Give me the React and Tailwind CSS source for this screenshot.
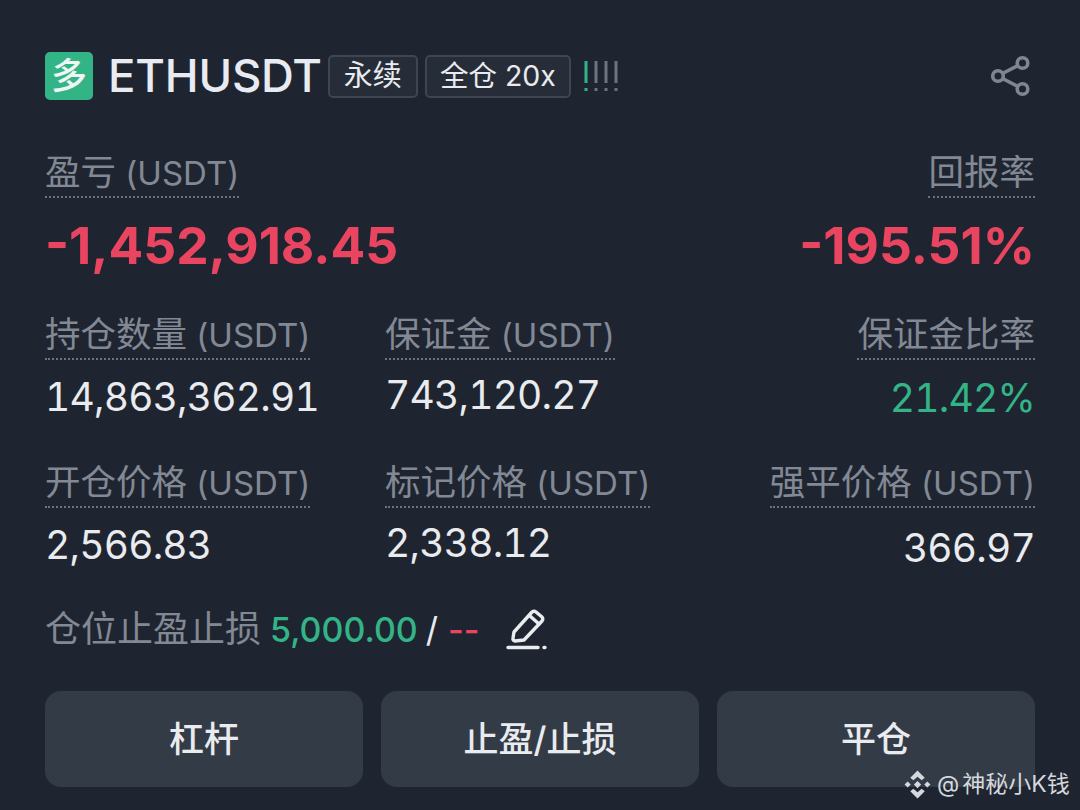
const F = { fontFamily: '"Inter","Noto Sans CJK SC",sans-serif' };

function Label({ cjk, unit }) {
  return (
    <div className="inline-block h-[46px] border-b-2 border-dotted border-[#6d7480] text-[#828995] leading-[42px] whitespace-nowrap">
      <span className="text-[35.500px]">{cjk}</span>
      {unit && <span className="text-[33px]"> {unit}</span>}
    </div>
  );
}

function Cell({ cjk, unit, value, right, valueClass = "text-[#e9ebef]", mt = "mt-[11px]" }) {
  return (
    <div className={"flex flex-col h-[109px] " + (right ? "items-end" : "items-start")}>
      <Label cjk={cjk} unit={unit} />
      <div className={"text-[39px] tracking-[-0.8px] leading-[52px] tabular-nums whitespace-nowrap " + mt + " " + valueClass}>{value}</div>
    </div>
  );
}

function Share() {
  return (
    <svg width="42" height="42" viewBox="0 0 42 42" fill="none" stroke="#7f8692" strokeWidth="3.600">
      <circle cx="32.500" cy="8" r="5.300" />
      <circle cx="8" cy="21" r="5.300" />
      <circle cx="32.500" cy="34" r="5.300" />
      <path d="M12.500 18.500 L27.800 10.500 M12.500 23.500 L27.800 31.500" />
    </svg>
  );
}

function Pencil() {
  return (
    <svg width="42" height="42" viewBox="0 0 42 42" fill="none" stroke="#eaecef" strokeWidth="3.400" strokeLinecap="round" strokeLinejoin="round">
      <path d="M8 24 L26 4 Q28 2.500 30 4 L36 9 Q37.500 11 36 13 L18 32 L9 33 Q6.500 32.500 7 30 Z" />
      <path d="M24 8 L33 16" />
      <path d="M2 39.500 H32 M38 39.500 H39" />
    </svg>
  );
}

function Risk() {
  const bars = [
    [2, "#33b487"],
    [12, "#6d7480"],
    [22, "#6d7480"],
    [32, "#6d7480"],
  ];
  return (
    <svg width="34" height="34" viewBox="0 0 34 34" fill="none" strokeWidth="3">
      {bars.map(([x, c]) => (
        <g key={x} stroke={c}>
          <path d="M0 2 V24" transform={`translate(${x} 0)`} />
          <path d="M0 29 V32" transform={`translate(${x} 0)`} />
        </g>
      ))}
    </svg>
  );
}

function Binance() {
  return (
    <svg width="29" height="29" viewBox="0 0 28 28" fill="#d5d8dc">
      <path d="M14 0.500 L21 7.500 L18 10 L14 6.500 L10 10 L7 7.500 Z" />
      <path d="M14 27.500 L21 20.500 L18 18 L14 21.500 L10 18 L7 20.500 Z" />
      <path d="M14 10.500 L17.500 14 L14 17.500 L10.500 14 Z" />
      <path d="M4.500 11 L7.500 14 L4.500 17 L1.500 14 Z" />
      <path d="M23.500 11 L26.500 14 L23.500 17 L20.500 14 Z" />
    </svg>
  );
}

export default function App() {
  return (
    <div style={F} className="relative w-[1080px] h-[810px] overflow-hidden bg-[#1f2530] pl-[45px] pr-[45px] pt-[52px]">
      <div className="flex items-center h-[48px]">
        <div className="w-[48px] h-[48px] rounded-[5px] bg-[#33b487] flex items-center justify-center text-[#eef5f2] text-[36px] font-medium leading-none">多</div>
        <div className="ml-[15px] text-[45.500px] font-medium text-[#e9ebf2] leading-none tracking-[-0.2px]">ETHUSDT</div>
        <div className="ml-[6px] w-[90px] h-[43px] justify-center rounded-[5px] border-2 border-[#3f4653] bg-[#272d38] text-[#e9ebef] text-[29px] flex items-center">永续</div>
        <div className="ml-[7px] w-[146px] h-[43px] justify-center rounded-[5px] border-2 border-[#3f4653] bg-[#272d38] text-[#e9ebef] text-[28.500px] flex items-center whitespace-nowrap">全仓 20x</div>
        <div className="ml-[13px] flex items-center"><Risk /></div>
        <div className="ml-auto mr-[3px]"><Share /></div>
      </div>

      <div className="flex justify-between mt-[52px]">
        <div className="flex flex-col items-start">
          <Label cjk="盈亏" unit="(USDT)" />
          <div className="text-[51.500px] font-bold leading-[60px] mt-[17px] text-[#ea4560] whitespace-nowrap">-1,452,918.45</div>
        </div>
        <div className="flex flex-col items-end">
          <Label cjk="回报率" />
          <div className="text-[51.500px] font-bold leading-[60px] mt-[17px] text-[#ea4560] whitespace-nowrap">-195.51%</div>
        </div>
      </div>

      <div className="grid grid-cols-[340px_1fr_auto] mt-[39px]">
        <Cell cjk="持仓数量" unit="(USDT)" value="14,863,362.91" />
        <Cell cjk="保证金" unit="(USDT)" value="743,120.27" mt="mt-[9px]" />
        <Cell cjk="保证金比率" value="21.42%" right valueClass="text-[#33b487]" mt="mt-[12px]" />
      </div>

      <div className="grid grid-cols-[340px_1fr_auto] mt-[39px]">
        <Cell cjk="开仓价格" unit="(USDT)" value="2,566.83" />
        <Cell cjk="标记价格" unit="(USDT)" value="2,338.12" mt="mt-[9px]" />
        <Cell cjk="强平价格" unit="(USDT)" value="366.97" right mt="mt-[14px]" />
      </div>

      <div className="flex items-center mt-[34px] h-[48px] whitespace-nowrap">
        <span className="text-[#828995] text-[36px]">仓位止盈止损</span>
        <span className="ml-[9px] text-[#33b487] text-[34px] font-medium">5,000.00</span>
        <span className="ml-[8px] text-[#e9ebef] text-[34px]">/</span>
        <span className="ml-[10px] text-[#ea4560] text-[34px] font-medium">--</span>
        <span className="ml-[26px]"><Pencil /></span>
      </div>

      <div className="grid grid-cols-3 gap-[18px] mt-[38px]">
        {["杠杆", "止盈/止损", "平仓"].map((t) => (
          <button key={t} className="h-[96px] rounded-[16px] bg-[#333b47] text-[#e9ebef] text-[35px] font-medium">{t}</button>
        ))}
      </div>

      <div className="absolute left-[903px] top-[767px] flex items-center text-[#d5d8dc] text-[23px] whitespace-nowrap">
        <Binance />
        <span className="ml-[5px]">@</span>
        <span className="ml-[3px]">神秘小K钱</span>
      </div>
    </div>
  );
}
